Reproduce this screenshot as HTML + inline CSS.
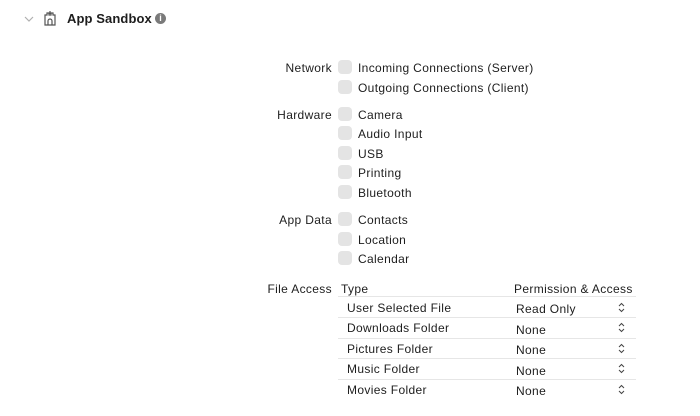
<!DOCTYPE html>
<html><head><style>
body{margin:0;width:700px;height:416px;background:#fff;font-family:"Liberation Sans",sans-serif;font-size:12px;color:#1d1d1d;position:relative;overflow:hidden;letter-spacing:0.35px}
.a{position:absolute;white-space:nowrap;line-height:14px}
.l{position:absolute;right:368px;text-align:right;white-space:nowrap;line-height:14px}
.cb{position:absolute;left:338px;width:14px;height:14px;border-radius:4px;background:#e4e4e4}
.sep{position:absolute;left:338px;width:298px;height:1px;background:#e6e6e6}
</style></head><body>
<svg class="a" style="left:23px;top:14px" width="12" height="10"><path d="M2 3l4 4 4-4" fill="none" stroke="#b0b0b0" stroke-width="1.2"/></svg>
<svg class="a" style="left:43px;top:10px" width="14" height="16"><path d="M2 15V5h2V3h2v2h2V3h2v2h2v10zM5 15v-4a2 2 0 0 1 4 0v4M7 1v3" fill="none" stroke="#555" stroke-width="1.2"/></svg>
<div class="a" style="left:67px;top:12px;font-weight:bold;font-size:13px;letter-spacing:0.1px">App Sandbox</div>
<div class="a" style="left:155px;top:13px;width:11px;height:11px;border-radius:50%;background:#7a7a7a;color:#fff;font-size:9px;line-height:11px;text-align:center;font-weight:bold;letter-spacing:0">i</div>

<div class="l" style="top:61px">Network</div>
<div class="l" style="top:108px">Hardware</div>
<div class="l" style="top:213px">App Data</div>
<div class="l" style="top:282px">File Access</div>

<div class="cb" style="top:60px"></div><div class="a" style="left:358px;top:61px">Incoming Connections (Server)</div>
<div class="cb" style="top:80px"></div><div class="a" style="left:358px;top:81px">Outgoing Connections (Client)</div>
<div class="cb" style="top:107px"></div><div class="a" style="left:358px;top:108px">Camera</div>
<div class="cb" style="top:126px"></div><div class="a" style="left:358px;top:127px">Audio Input</div>
<div class="cb" style="top:146px"></div><div class="a" style="left:358px;top:147px">USB</div>
<div class="cb" style="top:165px"></div><div class="a" style="left:358px;top:166px">Printing</div>
<div class="cb" style="top:185px"></div><div class="a" style="left:358px;top:186px">Bluetooth</div>
<div class="cb" style="top:212px"></div><div class="a" style="left:358px;top:213px">Contacts</div>
<div class="cb" style="top:232px"></div><div class="a" style="left:358px;top:233px">Location</div>
<div class="cb" style="top:251px"></div><div class="a" style="left:358px;top:252px">Calendar</div>

<div class="a" style="left:341px;top:282px">Type</div>
<div class="a" style="left:514px;top:282px">Permission &amp; Access</div>
<div class="sep" style="top:296px"></div>
<div class="a" style="left:347px;top:301px">User Selected File</div><div class="a" style="left:516px;top:302px">Read Only</div>
<div class="sep" style="top:317px"></div>
<div class="a" style="left:347px;top:321px">Downloads Folder</div><div class="a" style="left:516px;top:323px">None</div>
<div class="sep" style="top:338px"></div>
<div class="a" style="left:347px;top:342px">Pictures Folder</div><div class="a" style="left:516px;top:343px">None</div>
<div class="sep" style="top:358px"></div>
<div class="a" style="left:347px;top:362px">Music Folder</div><div class="a" style="left:516px;top:364px">None</div>
<div class="sep" style="top:379px"></div>
<div class="a" style="left:347px;top:383px">Movies Folder</div><div class="a" style="left:516px;top:384px">None</div>
<svg style="position:absolute;left:0;top:0" width="700" height="416">
<g fill="none" stroke="#444" stroke-width="1">
<path d="M619 306l2.5-2.5 2.5 2.5M619 309l2.5 2.5 2.5-2.5"/>
<path d="M619 326l2.5-2.5 2.5 2.5M619 329l2.5 2.5 2.5-2.5"/>
<path d="M619 347l2.5-2.5 2.5 2.5M619 350l2.5 2.5 2.5-2.5"/>
<path d="M619 367l2.5-2.5 2.5 2.5M619 370l2.5 2.5 2.5-2.5"/>
<path d="M619 388l2.5-2.5 2.5 2.5M619 391l2.5 2.5 2.5-2.5"/>
</g></svg>
</body></html>
